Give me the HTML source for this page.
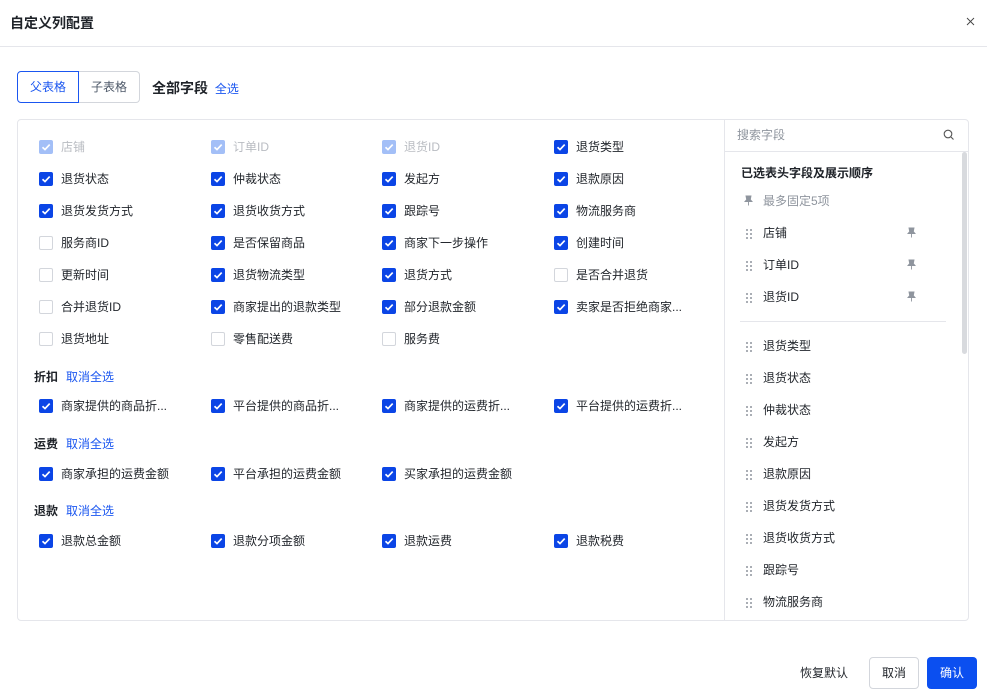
<!DOCTYPE html>
<html><head><meta charset="utf-8"><style>
*{box-sizing:border-box;margin:0;padding:0}
body{width:987px;height:691px;background:#fff;font-family:"Liberation Sans","Noto Sans CJK SC",sans-serif;font-size:12px;color:#1f2329;position:relative;overflow:hidden}
.a{position:absolute;white-space:nowrap}
.cb{position:absolute;width:14px;height:14px;border-radius:2px;background:#0b45e6}
.cb svg{position:absolute;left:2px;top:2px}
.cb.d{background:#a3bff7}
.cb.u{background:#fff;border:1px solid #d3d6dc}
.lb{position:absolute;font-size:12px;line-height:16px;color:#1f2329}
.lb.g{color:#b9bcc2}
.sec{position:absolute;font-size:12px;font-weight:bold;color:#1f2329}
.lnk{color:#1a56f0;font-weight:normal;margin-left:8px}
.drag{position:absolute;width:6px;height:10px}
.ri{position:absolute;font-size:12px;color:#1f2329}
</style></head><body>
<div class="a" style="left:10px;top:13px;font-size:14px;font-weight:bold">自定义列配置</div>
<svg class="a" style="left:966px;top:17px" width="9" height="9" viewBox="0 0 9 9"><path d="M1 1L8 8M8 1L1 8" stroke="#444" stroke-width="0.9"/></svg>
<div class="a" style="left:0;top:46px;width:987px;height:1px;background:#e5e6eb"></div>

<div class="a" style="left:17px;top:71px;width:62px;height:32px;border:1px solid #1a56f0;border-radius:4px 0 0 4px;color:#1a56f0;text-align:center;line-height:30px">父表格</div>
<div class="a" style="left:79px;top:71px;width:61px;height:32px;border:1px solid #d3d6dc;border-left:none;border-radius:0 4px 4px 0;color:#4e5969;text-align:center;line-height:30px">子表格</div>
<div class="a" style="left:152px;top:78px;font-size:14px;font-weight:bold">全部字段 <span style="font-size:12px;font-weight:normal;color:#1a56f0;margin-left:3px">全选</span></div>

<div class="a" style="left:17px;top:119px;width:952px;height:502px;border:1px solid #e5e6eb;border-radius:4px"></div>
<div class="a" style="left:724px;top:120px;width:1px;height:500px;background:#e5e6eb"></div>
<div class="a" style="left:725px;top:151px;width:243px;height:1px;background:#e5e6eb"></div>
<div class="a" style="left:737px;top:126px;color:#8f959e">搜索字段</div>
<svg class="a" style="left:943px;top:129px" width="12" height="12" viewBox="0 0 12 12"><circle cx="5" cy="5" r="3.8" fill="none" stroke="#555" stroke-width="1.1"/><path d="M8 8L10.5 10.5" stroke="#555" stroke-width="1.1"/></svg>
<div class="a" style="left:962px;top:152px;width:5px;height:202px;background:#d8dade;border-radius:3px"></div>

<div id="L"></div>
<div id="R"></div>
<div class="a" style="left:740px;top:321px;width:206px;height:1px;background:#e5e6eb"></div>
<div class="a" style="left:741px;top:164px;font-weight:bold">已选表头字段及展示顺序</div>
<svg class="a" style="left:744px;top:195px" width="9" height="11" viewBox="0 0 9 11"><path d="M2 1H7L6.3 4.5L8 6.5H1L2.7 4.5Z M4.5 6.5V10.5" fill="#8f959e" stroke="#8f959e" stroke-width="0.9"/></svg>
<div class="a" style="left:763px;top:192px;color:#8f959e">最多固定5项</div>

<div class="a" style="left:800px;top:664px;color:#1f2329">恢复默认</div>
<div class="a" style="left:869px;top:657px;width:50px;height:32px;border:1px solid #d3d6dc;border-radius:4px;text-align:center;line-height:30px">取消</div>
<div class="a" style="left:927px;top:657px;width:50px;height:32px;background:#0b4ff0;border-radius:4px;text-align:center;line-height:32px;color:#fff">确认</div>

<script>
var ck='<svg width="10" height="10" viewBox="0 0 10 10"><path d="M1.5 5.2L4 7.6L8.7 2.6" fill="none" stroke="#fff" stroke-width="1.7"/></svg>';
var xs=[39,211,382,554];
var rows=[
[147,[["店铺","d"],["订单ID","d"],["退货ID","d"],["退货类型","c"]]],
[179,[["退货状态","c"],["仲裁状态","c"],["发起方","c"],["退款原因","c"]]],
[211,[["退货发货方式","c"],["退货收货方式","c"],["跟踪号","c"],["物流服务商","c"]]],
[243,[["服务商ID","u"],["是否保留商品","c"],["商家下一步操作","c"],["创建时间","c"]]],
[275,[["更新时间","u"],["退货物流类型","c"],["退货方式","c"],["是否合并退货","u"]]],
[307,[["合并退货ID","u"],["商家提出的退款类型","c"],["部分退款金额","c"],["卖家是否拒绝商家...","c"]]],
[339,[["退货地址","u"],["零售配送费","u"],["服务费","u"]]],
[406,[["商家提供的商品折...","c"],["平台提供的商品折...","c"],["商家提供的运费折...","c"],["平台提供的运费折...","c"]]],
[474,[["商家承担的运费金额","c"],["平台承担的运费金额","c"],["买家承担的运费金额","c"]]],
[541,[["退款总金额","c"],["退款分项金额","c"],["退款运费","c"],["退款税费","c"]]]];
var h='';
rows.forEach(function(r){r[1].forEach(function(it,i){var x=xs[i],y=r[0];
h+='<div class="cb '+(it[1]=='c'?'':it[1])+'" style="left:'+x+'px;top:'+(y-7)+'px">'+(it[1]=='u'?'':ck)+'</div>';
h+='<div class="lb'+(it[1]=='d'?' g':'')+'" style="left:'+(x+22)+'px;top:'+(y-8)+'px">'+it[0]+'</div>';});});
[["折扣",377],["运费",444],["退款",511]].forEach(function(s){h+='<div class="sec" style="left:34px;top:'+(s[1]-9)+'px">'+s[0]+'<span class="lnk">取消全选</span></div>';});
document.getElementById('L').innerHTML=h;
var dr='<svg width="6" height="10" viewBox="0 0 6 10"><g fill="#8f959e"><circle cx="1" cy="1" r="1"/><circle cx="5" cy="1" r="1"/><circle cx="1" cy="5" r="1"/><circle cx="5" cy="5" r="1"/><circle cx="1" cy="9" r="1"/><circle cx="5" cy="9" r="1"/></g></svg>';
var pin='<svg width="9" height="11" viewBox="0 0 9 11"><path d="M2 1H7L6.3 4.5L8 6.5H1L2.7 4.5Z M4.5 6.5V10.5" fill="#8f959e" stroke="#8f959e" stroke-width="0.9"/></svg>';
var it=[["店铺",233,1],["订单ID",265,1],["退货ID",297,1],["退货类型",346],["退货状态",378],["仲裁状态",410],["发起方",442],["退款原因",474],["退货发货方式",506],["退货收货方式",538],["跟踪号",570],["物流服务商",602]];
var g='';
it.forEach(function(t){g+='<div class="drag" style="left:746px;top:'+(t[1]-5)+'px">'+dr+'</div><div class="ri" style="left:763px;top:'+(t[1]-9)+'px">'+t[0]+'</div>';
if(t[2])g+='<div class="a" style="left:907px;top:'+(t[1]-6)+'px">'+pin+'</div>';});
document.getElementById('R').innerHTML=g;
</script>
</body></html>
